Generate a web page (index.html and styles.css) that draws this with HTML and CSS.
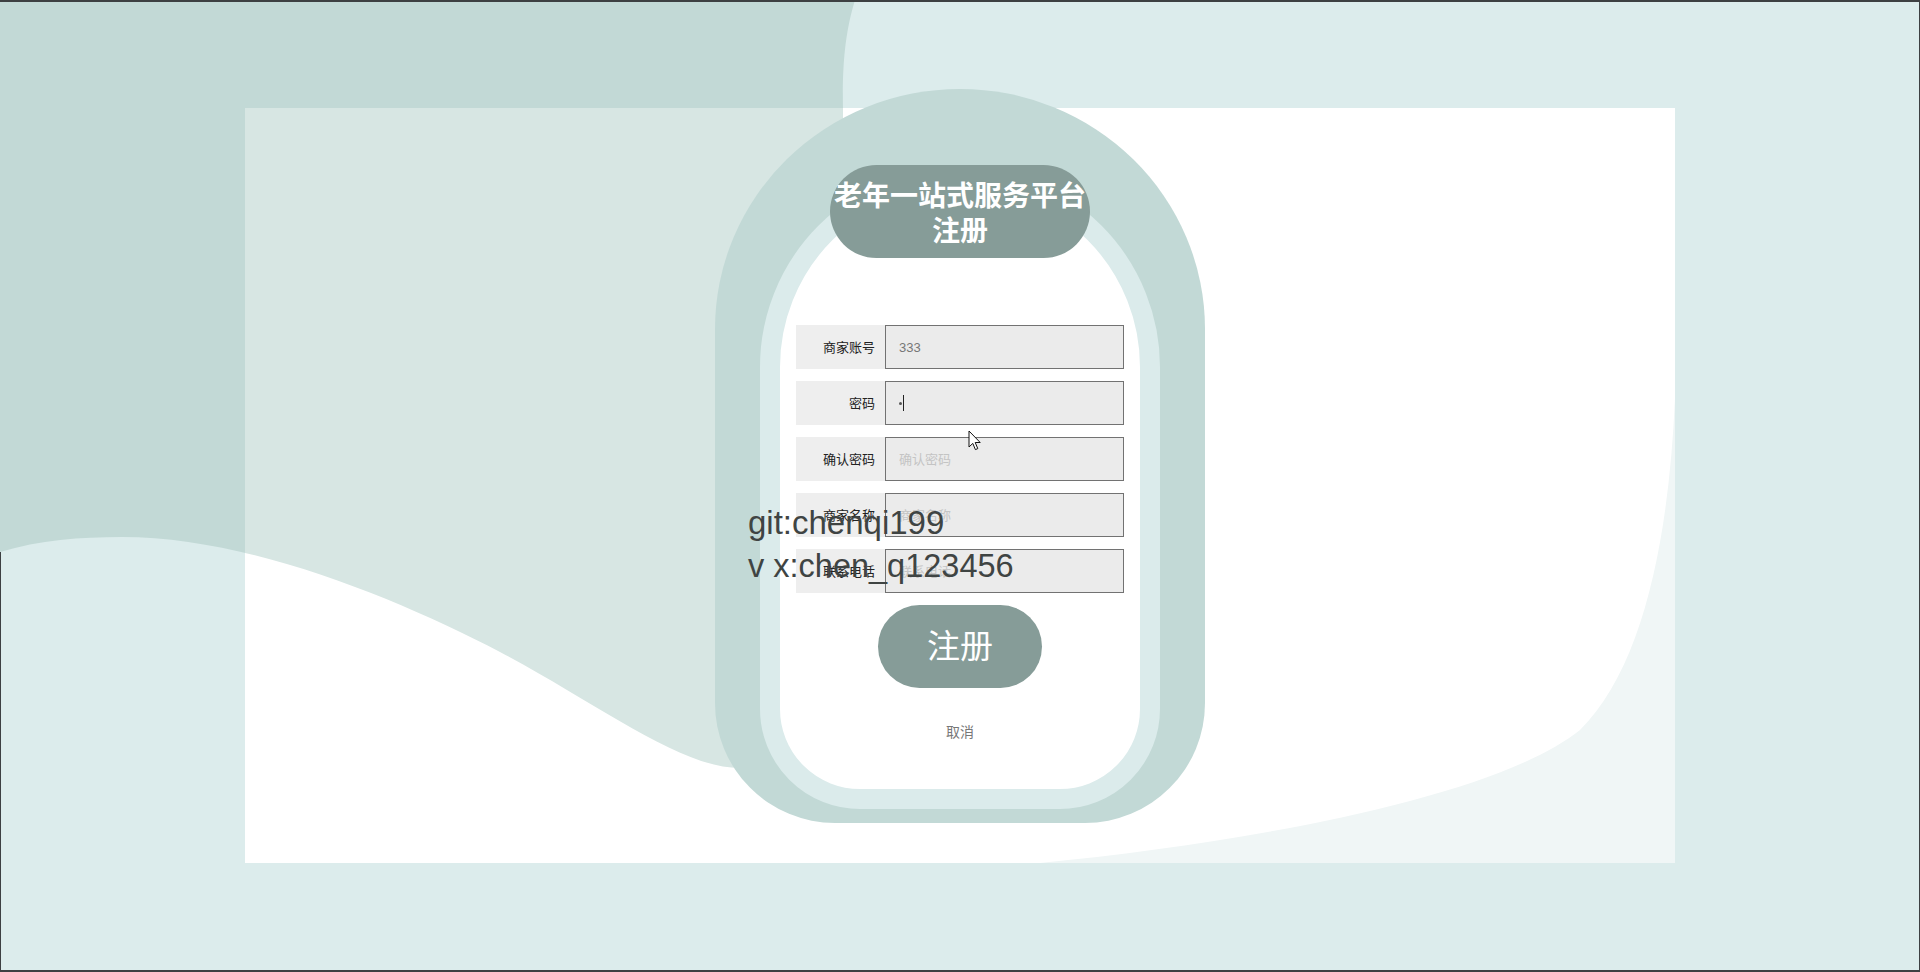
FILE: index.html
```html
<!DOCTYPE html>
<html lang="zh-CN">
<head>
<meta charset="utf-8">
<title>老年一站式服务平台注册</title>
<link rel="stylesheet" href="styles.css">
</head>
<body>
<div class="screen">
  <svg class="bg" width="1920" height="972" viewBox="0 0 1920 972" aria-hidden="true">
    <path fill="#c2d9d6" d="M0,0 L855,0 C846,30 842,60 843,110 L843,700 L740,768 C680,768 600,705 500,652 C400,600 250,537 122,537 C80,537 40,540 0,552 Z"/>
  </svg>
  <div class="card">
    <svg class="card-bg" width="1430" height="755" viewBox="0 0 1430 755" aria-hidden="true">
      <g transform="translate(-245,-108)">
        <path fill="#d7e6e3" d="M0,0 L855,0 C846,30 842,60 843,110 L843,700 L740,768 C680,768 600,705 500,652 C400,600 250,537 122,537 C80,537 40,540 0,552 Z"/>
      </g>
      <path fill="#f0f6f6" d="M795,755 C1000,735 1250,690 1335,622 C1398,560 1424,430 1430,290 L1430,755 Z"/>
    </svg>
    <div class="arch">
      <div class="frame">
        <div class="title">
          <span>老年一站式服务平台</span>
          <span>注册</span>
        </div>
        <form class="form">
          <div class="row"><label class="label">商家账号</label><input class="input" type="text" value="333" placeholder="商家账号"></div>
          <div class="row"><label class="label">密码</label><div class="input input-fake"><span class="dot"></span><span class="caret"></span></div></div>
          <div class="row"><label class="label">确认密码</label><input class="input" type="password" placeholder="确认密码"></div>
          <div class="row"><label class="label">商家名称</label><input class="input" type="text" placeholder="商家名称"></div>
          <div class="row"><label class="label">联系电话</label><input class="input" type="text" placeholder="联系电话"></div>
        </form>
        <button class="btn" type="button">注册</button>
        <div class="cancel">取消</div>
      </div>
    </div>
  </div>
  <div class="watermark">
    <div class="wm1">git:chenqi199</div>
    <div class="wm2">v x:chen_q123456</div>
  </div>
  <svg class="cursor" width="14" height="22" viewBox="0 0 14 22" aria-hidden="true">
    <path d="M1,1 L1,17 L4.8,13.4 L7.4,19.6 L9.8,18.6 L7.2,12.5 L12.2,12.5 Z" fill="#fff" stroke="#111" stroke-width="1" stroke-linejoin="round"/>
  </svg>
</div>
</body>
</html>
```

FILE: styles.css
```css
* {
  box-sizing: border-box;
}

body {
  margin: 0;
  background: #dcecec;
  font-family: "Noto Sans CJK SC", "Liberation Sans", sans-serif;
}

.screen {
  position: relative;
  width: 1920px;
  height: 972px;
  overflow: hidden;
  padding-top: 108px;
}

.screen::after {
  content: "";
  position: absolute;
  inset: 0;
  border-top: 2px solid #3d4042;
  border-bottom: 2px solid #3d4042;
  border-right: 1px solid #3d4042;
  pointer-events: none;
}

.screen::before {
  content: "";
  position: absolute;
  left: 0;
  top: 552px;
  bottom: 0;
  width: 1px;
  background: #3d4042;
  z-index: 5;
}

.bg {
  position: absolute;
  left: 0;
  top: 0;
}

.card {
  position: relative;
  width: 1430px;
  height: 755px;
  margin: 0 auto;
  background: #fff;
  display: flex;
  justify-content: center;
}

.card-bg {
  position: absolute;
  left: 0;
  top: 0;
}

.arch {
  position: relative;
  margin-top: -19px;
  width: 490px;
  height: 734px;
  background: #c2d9d6;
  border-radius: 245px 245px 120px 120px / 240px 240px 120px 120px;
  padding: 78px 45px 14px;
}

.frame {
  height: 100%;
  border: 20px solid #dbebeb;
  background: #fff;
  border-radius: 200px 200px 100px 100px;
  display: flex;
  flex-direction: column;
  align-items: center;
}

.title {
  margin-top: -22px;
  width: 260px;
  height: 93px;
  flex-shrink: 0;
  border-radius: 47px;
  background: #869c98;
  color: #fff;
  font-weight: 700;
  font-size: 28px;
  line-height: 35px;
  display: flex;
  flex-direction: column;
  justify-content: center;
  align-items: center;
  white-space: nowrap;
}

.form {
  margin: 67px 0 0;
  display: flex;
  flex-direction: column;
  gap: 12px;
  width: 328px;
}

.row {
  display: flex;
  height: 44px;
}

.label {
  width: 89px;
  background: #eeeeee;
  text-align: right;
  padding-right: 10px;
  font-size: 13px;
  line-height: 44px;
  color: #222;
}

.input {
  width: 239px;
  height: 44px;
  margin: 0;
  border: 1px solid #727272;
  background: #ebebeb;
  padding: 0 13px;
  font-size: 13px;
  color: #777;
  font-family: "Liberation Sans", "Noto Sans CJK SC", sans-serif;
  outline: none;
}

.input::placeholder {
  color: #c4c4c4;
  font-family: "Noto Sans CJK SC", sans-serif;
}

.input-fake {
  display: flex;
  align-items: center;
  gap: 1px;
}

.dot {
  width: 3px;
  height: 3px;
  border-radius: 50%;
  background: #555;
}

.caret {
  width: 1px;
  height: 16px;
  background: #222;
}

.btn {
  margin-top: 12px;
  width: 164px;
  height: 83px;
  flex-shrink: 0;
  border: 0;
  border-radius: 42px;
  background: #869c98;
  color: #fff;
  font-size: 33px;
  line-height: 1;
  font-family: "Noto Sans CJK SC", sans-serif;
  padding: 0 0 4px;
}

.cancel {
  margin-top: 33px;
  font-size: 14px;
  line-height: 20px;
  color: #777;
}

.watermark {
  position: absolute;
  left: 748px;
  top: 501px;
  color: #3f4443;
  font-family: "Liberation Sans", sans-serif;
  white-space: nowrap;
}

.wm1 {
  font-size: 33px;
  line-height: 43px;
}

.wm2 {
  font-size: 32.5px;
  line-height: 44px;
}

.cursor {
  position: absolute;
  left: 968px;
  top: 430px;
}
```
